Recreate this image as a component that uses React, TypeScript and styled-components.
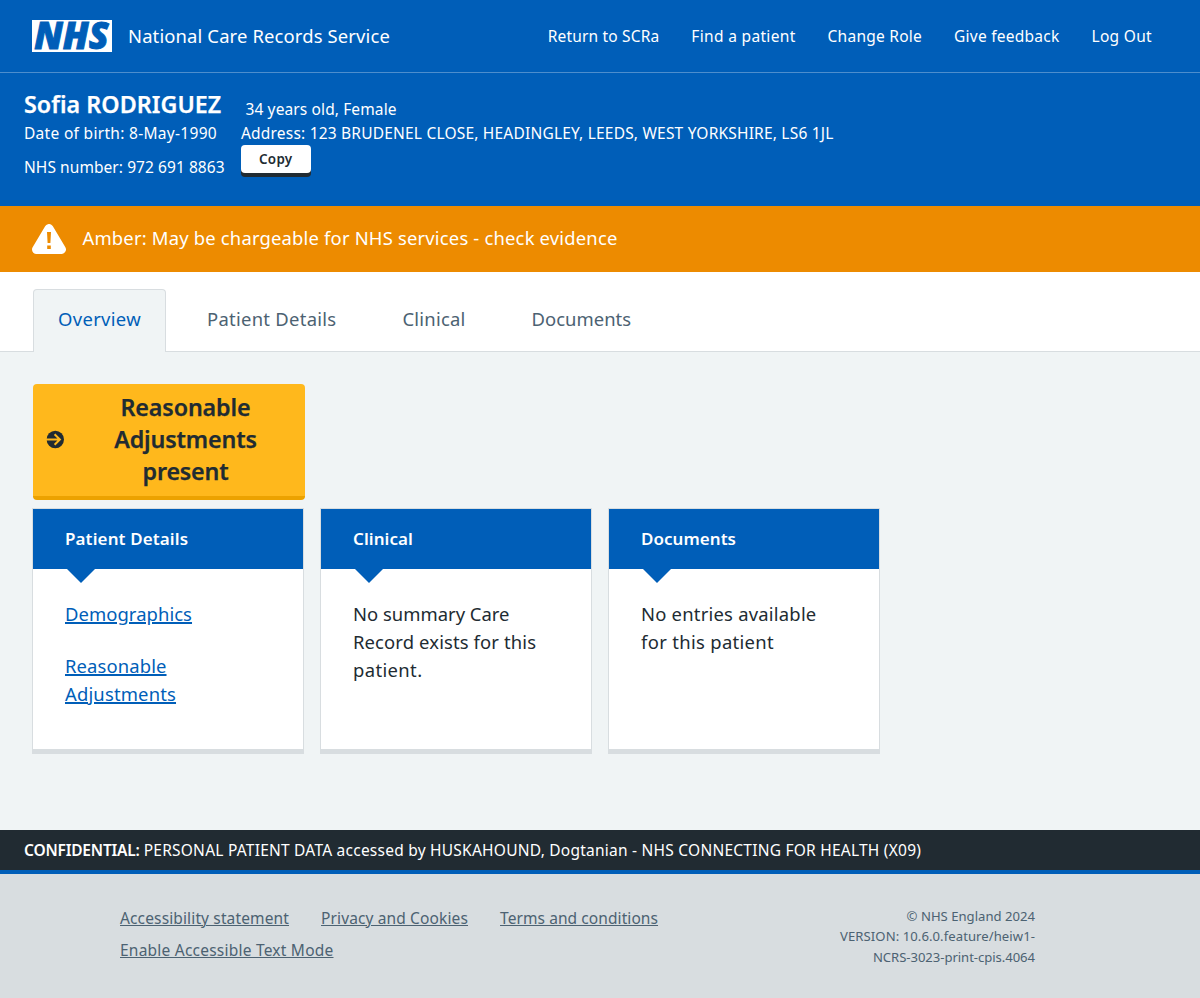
import React from "react";
import styled, { createGlobalStyle } from "styled-components";

const color = {
  blue: "#005eb8",
  amber: "#ed8b00",
  yellow: "#ffb81c",
  yellowDark: "#eca200",
  page: "#f0f4f5",
  line: "#d8dde0",
  ink: "#212b32",
  slate: "#4c6272",
  white: "#ffffff",
};

const GlobalStyle = createGlobalStyle`
  *, *::before, *::after { box-sizing: border-box; }
  body {
    margin: 0;
    background: ${color.page};
    color: ${color.ink};
    font-family: "Noto Sans", "Open Sans", sans-serif;
    font-size: 15.52px;
  }
  h1, h2, p, ul { margin: 0; padding: 0; font: inherit; }
  ul { list-style: none; }
`;

const Tracked = styled.span<{ $ls: number }>`
  letter-spacing: ${(p) => p.$ls}px;
`;

const Page = styled.div`
  display: flex;
  flex-direction: column;
  height: 998px;
`;

const Header = styled.header`
  display: flex;
  align-items: center;
  height: 73px;
  padding: 0 48px 1px 32px;
  background: ${color.blue};
  border-bottom: 1px solid #4d8ecd;
  color: ${color.white};
`;

const Logo = styled.svg`
  display: block;
  width: 80px;
  height: 32px;
  overflow: visible;
`;

const ServiceName = styled.span`
  margin-left: 16px;
  font-size: 18.43px;
  line-height: 28px;
`;

const HeaderNav = styled.nav`
  display: flex;
  gap: 32px;
  margin-left: auto;
`;

const HeaderLink = styled.a`
  line-height: 24px;
  white-space: nowrap;
`;

const PatientBanner = styled.section`
  display: flex;
  height: 133px;
  padding: 15px 24px 0;
  background: ${color.blue};
  color: ${color.white};
  line-height: 24px;
  white-space: nowrap;
`;

const Identity = styled.div`
  width: 217px;
`;

const PatientName = styled.h1`
  margin-bottom: 1px;
  font-size: 23.28px;
  font-weight: 600;
  line-height: 32px;
  -webkit-text-stroke: 0.25px currentColor;
`;

const NhsNumber = styled.p`
  margin-top: 10px;
`;

const Contact = styled.div`
  padding-top: 9px;
`;

const Age = styled.p`
  padding-left: 4.5px;
`;

const CopyButton = styled.button`
  display: block;
  width: 69.5px;
  height: 28px;
  padding: 0;
  border: 0;
  border-radius: 4px;
  background: ${color.white};
  box-shadow: 0 4px 0 ${color.ink};
  color: ${color.ink};
  font: 600 13.4px/28px "Noto Sans", sans-serif;
`;

const Alert = styled.section`
  display: flex;
  align-items: center;
  height: 66px;
  padding-left: 32px;
  background: ${color.amber};
  color: ${color.white};
  font-size: 18.43px;
`;

const AlertIcon = styled.svg`
  display: block;
  width: 34px;
  height: 30px;
`;

const AlertText = styled.p`
  margin-left: 16.5px;
  padding-bottom: 2px;
  line-height: 28px;
`;

const TabBar = styled.nav`
  display: flex;
  align-items: flex-end;
  gap: 16px;
  height: 80px;
  padding-left: 33px;
  background: ${color.white};
  box-shadow: inset 0 -1px 0 ${color.line};
  font-size: 18.43px;
`;

const Tab = styled.a<{ $active?: boolean }>`
  height: 63px;
  padding: 15px 24px 0;
  border: 1px solid ${(p) => (p.$active ? color.line : "transparent")};
  border-bottom: 0;
  border-radius: 4px 4px 0 0;
  background: ${(p) => (p.$active ? color.page : "transparent")};
  color: ${(p) => (p.$active ? color.blue : color.slate)};
  line-height: 28px;
`;

const Main = styled.main`
  flex: 1;
  padding: 32px 32px 0;
`;

const AdjustmentsButton = styled.button`
  display: flex;
  align-items: center;
  width: 272px;
  height: 116px;
  margin: 0 0 8px 1px;
  padding: 0 0 2px 13px;
  border: 0;
  border-bottom: 4px solid ${color.yellowDark};
  border-radius: 4px;
  background: ${color.yellow};
  color: ${color.ink};
  font: 600 23.28px/32px "Noto Sans", sans-serif;
  -webkit-text-stroke: 0.25px currentColor;
`;

const ArrowIcon = styled.svg`
  display: block;
  flex: none;
  width: 19px;
  height: 19px;
  margin-top: 1px;
`;

const ButtonLabel = styled.span`
  flex: 1;
  padding: 0 43px 0 44px;
  text-align: center;
`;

const Cards = styled.div`
  display: grid;
  grid-template-columns: repeat(3, 272px);
  gap: 16px;
`;

const Card = styled.section`
  height: 246px;
  border: 1px solid ${color.line};
  border-bottom-width: 5px;
  background: ${color.white};
`;

const CardTitle = styled.h2`
  position: relative;
  height: 60px;
  padding-left: 32px;
  background: ${color.blue};
  color: ${color.white};
  font-size: 16.98px;
  font-weight: 600;
  line-height: 60px;

  &::after {
    content: "";
    position: absolute;
    top: 100%;
    left: 34px;
    border: 14px solid transparent;
    border-top-color: ${color.blue};
    border-bottom: 0;
  }
`;

const CardBody = styled.div`
  display: flex;
  flex-direction: column;
  gap: 24px;
  padding: 31px 32px 0;
  font-size: 18.43px;
  line-height: 28px;
`;

const Line = styled(Tracked)`
  display: block;
`;

const CardLink = styled.a`
  color: ${color.blue};
  text-decoration: underline;
  text-decoration-thickness: 1.6px;
  text-underline-offset: 1px;
`;

const Confidential = styled.div`
  height: 40px;
  padding-left: 24px;
  background: ${color.ink};
  color: ${color.white};
  line-height: 40px;
  white-space: nowrap;
`;

const ConfidentialLabel = styled.strong`
  margin-right: 4px;
  font-weight: 600;
  letter-spacing: -0.2px;
`;

const Footer = styled.footer`
  display: flex;
  justify-content: space-between;
  height: 128px;
  padding: 28px 165px 0 120px;
  border-top: 4px solid ${color.blue};
  background: ${color.line};
  color: ${color.slate};
`;

const FooterLinks = styled.ul`
  display: flex;
  flex-wrap: wrap;
  align-content: flex-start;
  column-gap: 32px;
  width: 600px;
  line-height: 32px;
`;

const FooterLink = styled.a`
  text-decoration: underline;
  text-decoration-thickness: 1.3px;
  text-underline-offset: 1px;
`;

const Version = styled.div`
  padding-top: 4px;
  font-size: 13.1px;
  line-height: 20.4px;
  text-align: right;
`;

const headerLinks = [
  { label: "Return to SCRa", ls: 0.17 },
  { label: "Find a patient", ls: 0.32 },
  { label: "Change Role", ls: 0.24 },
  { label: "Give feedback", ls: 0.24 },
  { label: "Log Out", ls: 0.3 },
];

const tabs = [
  { label: "Overview", ls: 0.33, active: true },
  { label: "Patient Details", ls: 0.28 },
  { label: "Clinical", ls: 0.23 },
  { label: "Documents", ls: 0.04 },
];

const footerLinks = [
  { label: "Accessibility statement", ls: 0.128 },
  { label: "Privacy and Cookies", ls: 0.121 },
  { label: "Terms and conditions", ls: 0.074 },
  { label: "Enable Accessible Text Mode", ls: 0.219 },
];

export default function App() {
  return (
    <Page>
      <GlobalStyle />
      <Header>
        <Logo viewBox="0 0 80 32" role="img" aria-label="NHS">
          <rect width="80" height="32" fill={color.white} />
          <text
            x="2.2"
            y="29.4"
            fill={color.blue}
            stroke={color.blue}
            strokeWidth="0.9"
            fontFamily="Noto Sans, sans-serif"
            fontSize="36.8"
            fontStyle="italic"
            fontWeight="900"
            textLength="74.5"
            lengthAdjust="spacingAndGlyphs"
          >
            NHS
          </text>
        </Logo>
        <ServiceName>
          <Tracked $ls={0.135}>National Care Records Service</Tracked>
        </ServiceName>
        <HeaderNav>
          {headerLinks.map((l) => (
            <HeaderLink key={l.label}>
              <Tracked $ls={l.ls}>{l.label}</Tracked>
            </HeaderLink>
          ))}
        </HeaderNav>
      </Header>

      <PatientBanner>
        <Identity>
          <PatientName>
            <Tracked $ls={0.05}>Sofia RODRIGUEZ</Tracked>
          </PatientName>
          <p>
            <Tracked $ls={0.297}>Date of birth: 8-May-1990</Tracked>
          </p>
          <NhsNumber>
            <Tracked $ls={0.06}>NHS number: 972 691 8863</Tracked>
          </NhsNumber>
        </Identity>
        <Contact>
          <Age>
            <Tracked $ls={0.11}>34 years old, Female</Tracked>
          </Age>
          <p>
            <Tracked $ls={0.193}>
              Address: 123 BRUDENEL CLOSE, HEADINGLEY, LEEDS, WEST YORKSHIRE, LS6 1JL
            </Tracked>
          </p>
          <CopyButton>
            <Tracked $ls={0.3}>Copy</Tracked>
          </CopyButton>
        </Contact>
      </PatientBanner>

      <Alert>
        <AlertIcon viewBox="0 0 34 30" aria-hidden="true">
          <path
            d="M17 4.5 29.5 25.5H4.5Z"
            fill={color.white}
            stroke={color.white}
            strokeWidth="9"
            strokeLinejoin="round"
          />
          <path d="M15 8h4l-.6 11h-2.8ZM15.2 21.5h3.6V25h-3.6Z" fill={color.amber} />
        </AlertIcon>
        <AlertText>
          <Tracked $ls={0.18}>Amber: May be chargeable for NHS services - check evidence</Tracked>
        </AlertText>
      </Alert>

      <TabBar>
        {tabs.map((t) => (
          <Tab key={t.label} $active={t.active}>
            <Tracked $ls={t.ls}>{t.label}</Tracked>
          </Tab>
        ))}
      </TabBar>

      <Main>
        <AdjustmentsButton>
          <ArrowIcon viewBox="0 0 19 19" aria-hidden="true">
            <circle cx="9.3" cy="9.5" r="8.7" fill={color.ink} />
            <path
              d="M0 9.5h13.6M8.6 4.2l5.3 5.3-5.3 5.3"
              fill="none"
              stroke={color.yellow}
              strokeWidth="2"
            />
          </ArrowIcon>
          <ButtonLabel>
            <Line $ls={-0.13}>Reasonable</Line>
            <Line $ls={-0.15}>Adjustments</Line>
            <Line $ls={-0.2}>present</Line>
          </ButtonLabel>
        </AdjustmentsButton>

        <Cards>
          <Card>
            <CardTitle>
              <Tracked $ls={0.13}>Patient Details</Tracked>
            </CardTitle>
            <CardBody>
              <div>
                <CardLink>
                  <Tracked $ls={0.063}>Demographics</Tracked>
                </CardLink>
              </div>
              <div>
                <CardLink>
                  <Tracked $ls={0.116}>Reasonable</Tracked>
                  <br />
                  <Tracked $ls={0.165}>Adjustments</Tracked>
                </CardLink>
              </div>
            </CardBody>
          </Card>
          <Card>
            <CardTitle>
              <Tracked $ls={0.087}>Clinical</Tracked>
            </CardTitle>
            <CardBody>
              <p>
                <Line $ls={0.01}>No summary Care</Line>
                <Line $ls={0.13}>Record exists for this</Line>
                <Line $ls={0.38}>patient.</Line>
              </p>
            </CardBody>
          </Card>
          <Card>
            <CardTitle>
              <Tracked $ls={0.052}>Documents</Tracked>
            </CardTitle>
            <CardBody>
              <p>
                <Line $ls={0.22}>No entries available</Line>
                <Line $ls={0.327}>for this patient</Line>
              </p>
            </CardBody>
          </Card>
        </Cards>
      </Main>

      <Confidential>
        <ConfidentialLabel>CONFIDENTIAL:</ConfidentialLabel>
        <Tracked $ls={0.228}>
          PERSONAL PATIENT DATA accessed by HUSKAHOUND, Dogtanian - NHS CONNECTING FOR HEALTH (X09)
        </Tracked>
      </Confidential>

      <Footer>
        <FooterLinks>
          {footerLinks.map((l) => (
            <li key={l.label}>
              <FooterLink>
                <Tracked $ls={l.ls}>{l.label}</Tracked>
              </FooterLink>
            </li>
          ))}
        </FooterLinks>
        <Version>
          <Line $ls={0.01}>© NHS England 2024</Line>
          <Line $ls={0.07}>VERSION: 10.6.0.feature/heiw1-</Line>
          <Line $ls={-0.05}>NCRS-3023-print-cpis.4064</Line>
        </Version>
      </Footer>
    </Page>
  );
}
